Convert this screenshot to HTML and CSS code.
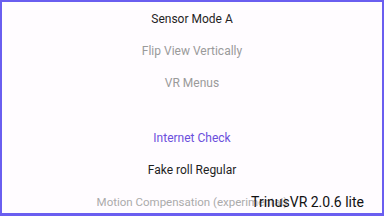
FILE: index.html
```html
<!DOCTYPE html>
<html>
<head>
<meta charset="utf-8">
<link rel="stylesheet" href="styles.css">
</head>
<body>
<div class="frame">
  <ul class="menu">
    <li class="item dark">Sensor Mode A</li>
    <li class="item muted">Flip View Vertically</li>
    <li class="item muted">VR Menus</li>
    <li class="spacer"></li>
    <li class="item accent">Internet Check</li>
    <li class="item dark">Fake roll Regular</li>
    <li class="item faint">Motion Compensation (experimental)</li>
  </ul>
  <div class="version">TrinusVR 2.0.6 lite</div>
</div>
</body>
</html>
```
FILE: styles.css
```css
html, body {
  margin: 0;
  padding: 0;
  width: 384px;
  height: 216px;
  overflow: hidden;
  background: #ffffff;
}
.frame {
  position: relative;
  box-sizing: border-box;
  width: 384px;
  height: 216px;
  border: 2px solid #6a5ef0;
  border-bottom-width: 3px;
  background: #fffcff;
  overflow: hidden;
  font-family: Roboto, "Noto Sans", sans-serif;
}
.menu {
  list-style: none;
  margin: 0;
  padding: 1px 0 0;
  display: flex;
  flex-direction: column;
  align-items: center;
}
.item {
  height: 32px;
  line-height: 32px;
  font-size: 12px;
  text-align: center;
  white-space: nowrap;
}
.spacer {
  height: 23px;
}
.dark { color: #1f1f1f; }
.muted { color: #9a9a9a; }
.faint { color: #ababab; font-size: 11.5px; }
.accent { color: #6b4fdc; }
.version {
  position: absolute;
  right: 18px;
  bottom: 4px;
  font-size: 14px;
  line-height: 14px;
  color: #111;
  white-space: nowrap;
}
```
